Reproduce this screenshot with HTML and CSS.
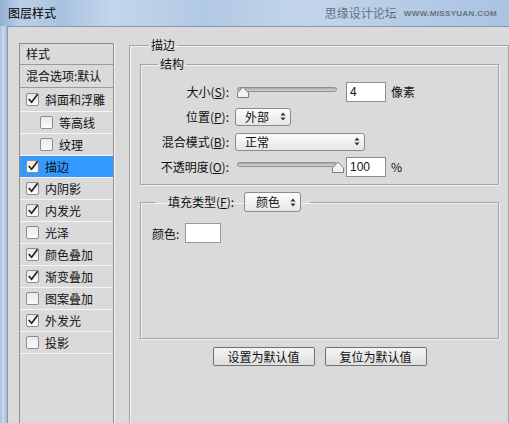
FILE: index.html
```html
<!DOCTYPE html>
<html lang="zh-CN">
<head>
<meta charset="utf-8">
<title>图层样式</title>
<link rel="stylesheet" href="styles.css">
</head>
<body>
<div class="titlebar">
  <span class="title">图层样式</span>
  <span class="watermark"><span class="wm-cn">思缘设计论坛</span><span class="wm-en">WWW.MISSYUAN.COM</span></span>
</div>
<div class="frame">
  <div class="frame-edge"></div>
  <div class="panel">
    <div class="list">
      <div class="list-head">样式</div>
      <div class="list-blend">混合选项:默认</div>
      <div class="item first"><span class="cb"><svg class="tick" width="12" height="12" viewBox="0 0 12 12"><path d="M1.8 6 L4.6 9.2 L10.6 1.2" fill="none" stroke="#1c1c1c" stroke-width="1.6"/></svg></span>斜面和浮雕</div>
      <div class="item sub"><span class="cb"></span>等高线</div>
      <div class="item sub"><span class="cb"></span>纹理</div>
      <div class="item active"><span class="cb"><svg class="tick" width="12" height="12" viewBox="0 0 12 12"><path d="M1.8 6 L4.6 9.2 L10.6 1.2" fill="none" stroke="#1c1c1c" stroke-width="1.6"/></svg></span>描边</div>
      <div class="item"><span class="cb"><svg class="tick" width="12" height="12" viewBox="0 0 12 12"><path d="M1.8 6 L4.6 9.2 L10.6 1.2" fill="none" stroke="#1c1c1c" stroke-width="1.6"/></svg></span>内阴影</div>
      <div class="item"><span class="cb"><svg class="tick" width="12" height="12" viewBox="0 0 12 12"><path d="M1.8 6 L4.6 9.2 L10.6 1.2" fill="none" stroke="#1c1c1c" stroke-width="1.6"/></svg></span>内发光</div>
      <div class="item"><span class="cb"></span>光泽</div>
      <div class="item"><span class="cb"><svg class="tick" width="12" height="12" viewBox="0 0 12 12"><path d="M1.8 6 L4.6 9.2 L10.6 1.2" fill="none" stroke="#1c1c1c" stroke-width="1.6"/></svg></span>颜色叠加</div>
      <div class="item"><span class="cb"><svg class="tick" width="12" height="12" viewBox="0 0 12 12"><path d="M1.8 6 L4.6 9.2 L10.6 1.2" fill="none" stroke="#1c1c1c" stroke-width="1.6"/></svg></span>渐变叠加</div>
      <div class="item"><span class="cb"></span>图案叠加</div>
      <div class="item"><span class="cb"><svg class="tick" width="12" height="12" viewBox="0 0 12 12"><path d="M1.8 6 L4.6 9.2 L10.6 1.2" fill="none" stroke="#1c1c1c" stroke-width="1.6"/></svg></span>外发光</div>
      <div class="item"><span class="cb"></span>投影</div>
    </div>

    <fieldset class="group outer">
      <legend class="legend-outer">描边</legend>
      <div class="outer-body">
        <fieldset class="group structure">
          <legend class="legend-structure">结构</legend>
          <div class="form">
            <span class="lbl">大小(<u>S</u>):</span>
            <div class="ctrl">
              <div class="slider"><div class="track"></div><svg class="thumb thumb-min" width="12" height="12" viewBox="0 0 12 12"><path d="M0.5 11.5 V6.8 L6 1 L11.5 6.8 V11.5 Z" fill="#f2f2f2" stroke="#7b7b7b"/></svg></div>
              <span class="field">4</span><span class="unit">像素</span>
            </div>

            <span class="lbl">位置(<u>P</u>):</span>
            <div class="ctrl">
              <span class="select sel-small"><span>外部</span><svg width="6" height="9" viewBox="0 0 6 9"><path d="M3 0.5 L5.5 3.5 H0.5Z M3 8.5 L5.5 5.5 H0.5Z" fill="#333"/></svg></span>
            </div>

            <span class="lbl">混合模式(<u>B</u>):</span>
            <div class="ctrl">
              <span class="select sel-wide"><span>正常</span><svg width="6" height="9" viewBox="0 0 6 9"><path d="M3 0.5 L5.5 3.5 H0.5Z M3 8.5 L5.5 5.5 H0.5Z" fill="#333"/></svg></span>
            </div>

            <span class="lbl">不透明度(<u>O</u>):</span>
            <div class="ctrl">
              <div class="slider"><div class="track"></div><svg class="thumb thumb-max" width="12" height="12" viewBox="0 0 12 12"><path d="M0.5 11.5 V6.8 L6 1 L11.5 6.8 V11.5 Z" fill="#f2f2f2" stroke="#7b7b7b"/></svg></div>
              <span class="field">100</span><span class="unit">%</span>
            </div>
          </div>
        </fieldset>

        <fieldset class="group fill">
          <legend class="legend-fill"><span class="fill-lbl">填充类型(<u>F</u>):</span><span class="select sel-fill"><span>颜色</span><svg width="6" height="9" viewBox="0 0 6 9"><path d="M3 0.5 L5.5 3.5 H0.5Z M3 8.5 L5.5 5.5 H0.5Z" fill="#333"/></svg></span></legend>
          <div class="fill-body"><span class="color-lbl">颜色:</span><span class="swatch"></span></div>
        </fieldset>

        <div class="buttons">
          <span class="btn">设置为默认值</span>
          <span class="btn">复位为默认值</span>
        </div>
      </div>
    </fieldset>
  </div>
</div>
</body>
</html>
```

FILE: styles.css
```css
html, body {
  margin: 0;
  padding: 0;
}
body {
  width: 509px;
  height: 423px;
  overflow: hidden;
  font-family: "Noto Sans CJK SC", "Liberation Sans", sans-serif;
  font-size: 12px;
  color: #111;
  background: #dadada;
}
.titlebar {
  height: 26px;
  box-sizing: border-box;
  display: flex;
  align-items: center;
  justify-content: space-between;
  padding: 0 12px 0 8px;
  background: linear-gradient(to right, #93b1d3 0%, #bcd0e7 4%, #a9c2df 12%, #c3d6ec 22%, #b2c9e4 40%, #c2d5eb 60%, #a9c3e1 100%);
}
.title {
  font-size: 12px;
  line-height: 14px;
  color: #000;
}
.watermark {
  display: flex;
  align-items: center;
  gap: 7px;
  color: #66717f;
}
.wm-cn {
  font-size: 12px;
  line-height: 14px;
}
.wm-en {
  font-family: "Liberation Sans", sans-serif;
  font-size: 8px;
  font-weight: bold;
  letter-spacing: 0.35px;
}
.frame {
  display: flex;
  height: 397px;
}
.frame-edge {
  width: 7px;
  flex: none;
  background: linear-gradient(to right, #a6bfdc, #c9d9ec 45%, #a2bcdb);
}
.panel {
  flex: 1;
  display: flex;
  align-items: flex-start;
  background: #dadada;
  border-top: 1px solid #8796aa;
  border-left: 1px solid #8796aa;
  overflow: hidden;
}
.list {
  flex: none;
  box-sizing: border-box;
  width: 95px;
  height: 400px;
  margin: 16px 0 0 11px;
  border: 1px solid #8e8e8e;
  box-shadow: 1px 0 0 #f3f3f3;
}
.list-head {
  height: 20px;
  line-height: 20px;
  padding-left: 6px;
  border-bottom: 1px solid #9a9a9a;
}
.list-blend {
  height: 22px;
  line-height: 22px;
  padding-left: 6px;
  border-bottom: 1px solid #9a9a9a;
}
.item {
  height: 21px;
  display: flex;
  align-items: center;
  gap: 6px;
  padding-left: 6px;
  border-bottom: 1px solid #f5f5f5;
}
.item.first {
  height: 23px;
}
.item.sub {
  padding-left: 20px;
}
.item.active {
  background: #3399ff;
}
.cb {
  position: relative;
  flex: none;
  box-sizing: border-box;
  width: 13px;
  height: 13px;
  border: 1px solid #8d8d8d;
  border-radius: 2px;
  background: linear-gradient(#e9e9e9, #fbfbfb);
}
.tick {
  position: absolute;
  left: 0;
  top: -1px;
}
.group {
  margin: 0;
  padding: 0;
  min-width: 0;
  box-sizing: border-box;
  border: 1px solid #a4a4a4;
  box-shadow: inset 1px 1px 0 #f2f2f2, 1px 1px 0 #f2f2f2;
}
legend {
  font-size: 12px;
  line-height: 16px;
}
.outer {
  flex: none;
  width: 380px;
  height: 420px;
  margin: 10px 0 0 15px;
}
.legend-outer {
  margin-left: 19px;
  padding: 0 2px;
}
.outer-body {
  padding: 3px 9px 0 10px;
}
.structure {
  width: 359px;
}
.legend-structure {
  margin-left: 17px;
  padding: 0 2px;
}
.form {
  display: grid;
  grid-template-columns: 88px auto;
  grid-auto-rows: 25px;
  column-gap: 6px;
  align-items: center;
  padding: 7px 0 5px 0;
}
.lbl {
  text-align: right;
  white-space: nowrap;
}
.ctrl {
  display: flex;
  align-items: center;
}
.slider {
  position: relative;
  flex: none;
  width: 110px;
  height: 12px;
  margin-right: 1px;
}
.track {
  position: absolute;
  left: 2px;
  top: 1px;
  width: 100px;
  height: 5px;
  box-sizing: border-box;
  border-radius: 3px;
  border: 1px solid #8f8f8f;
  background: linear-gradient(#a8a8a8, #d4d4d4);
}
.thumb {
  position: absolute;
  top: 0;
}
.thumb-min {
  left: 2px;
}
.thumb-max {
  left: 97px;
}
.field {
  box-sizing: border-box;
  width: 40px;
  height: 20px;
  line-height: 18px;
  padding-left: 3px;
  background: #fff;
  border: 1px solid #8c8c8c;
  font-family: "Liberation Sans", sans-serif;
  font-size: 12px;
}
.unit {
  margin-left: 5px;
}
.select {
  box-sizing: border-box;
  display: flex;
  align-items: center;
  justify-content: space-between;
  height: 18px;
  padding: 0 4px 0 9px;
  border: 1px solid #8a8a8a;
  border-radius: 3px;
  background: linear-gradient(#fcfcfc, #e6e6e6);
  line-height: 16px;
}
.sel-small {
  width: 56px;
}
.sel-wide {
  width: 130px;
}
.fill {
  width: 359px;
  height: 147px;
  margin-top: 7px;
}
.legend-fill {
  margin-left: 14px;
  padding: 0 9px 0 13px;
  display: flex;
  align-items: center;
  gap: 4px;
}
.fill-lbl {
  width: 72px;
  white-space: nowrap;
}
.sel-fill {
  width: 57px;
  height: 20px;
  padding-left: 11px;
}
.fill-body {
  display: flex;
  align-items: center;
  padding: 11px 0 0 11px;
}
.color-lbl {
  width: 33px;
}
.swatch {
  box-sizing: border-box;
  width: 36px;
  height: 20px;
  background: #fff;
  border: 1px solid #9a9a9a;
}
.buttons {
  display: flex;
  justify-content: center;
  gap: 10px;
  margin-top: 8px;
}
.btn {
  box-sizing: border-box;
  width: 102px;
  height: 19px;
  line-height: 17px;
  text-align: center;
  border: 1px solid #707070;
  border-radius: 2px;
  background: linear-gradient(#f4f4f4, #dedede);
}
```
